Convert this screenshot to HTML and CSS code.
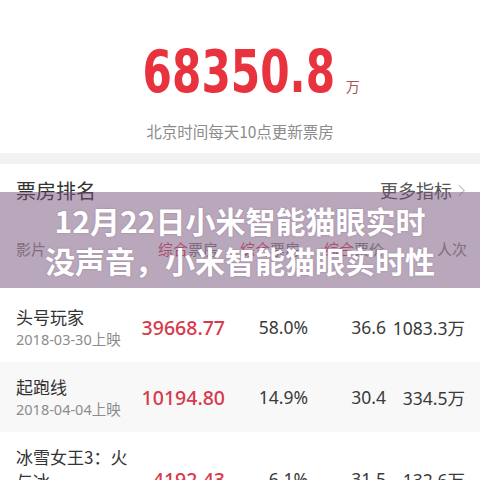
FILE: index.html
```html
<!DOCTYPE html>
<html lang="zh-CN">
<head>
<meta charset="utf-8">
<title>票房</title>
<link rel="stylesheet" href="styles.css">
</head>
<body>
<div class="page">
  <section class="summary">
    <div class="total">
      <span class="total-num">68350.8</span><span class="total-unit">万</span>
    </div>
    <div class="total-note">北京时间每天10点更新票房</div>
  </section>
  <div class="band"></div>
  <section class="rank">
    <div class="rank-head">
      <span class="rank-title">票房排名</span>
      <span class="rank-more">更多指标<svg class="chev" viewBox="0 0 10 16" width="9" height="15"><path d="M2 2 L8 8 L2 14" fill="none" stroke="#c4c4c4" stroke-width="1.4"/></svg></span>
    </div>
    <div class="grid thead">
      <span class="h-film">影片</span>
      <span class="h1"><em>综合</em>票房</span>
      <span class="h2"><em>综合</em>票房</span>
      <span class="h3"><em>综合</em>票价</span>
      <span class="h4">人次</span>
    </div>
    <div class="grid row">
      <div class="film"><div class="name">头号玩家</div><div class="date">2018-03-30上映</div></div>
      <span class="box">39668.77</span>
      <span class="num">58.0%</span>
      <span class="num">36.6</span>
      <span class="num">1083.3万</span>
    </div>
    <div class="grid row alt">
      <div class="film"><div class="name">起跑线</div><div class="date">2018-04-04上映</div></div>
      <span class="box">10194.80</span>
      <span class="num">14.9%</span>
      <span class="num">30.4</span>
      <span class="num">334.5万</span>
    </div>
    <div class="grid row">
      <div class="film"><div class="name">冰雪女王3：火与冰</div><div class="date">2018-04-06上映</div></div>
      <span class="box">4192.43</span>
      <span class="num">6.1%</span>
      <span class="num">31.5</span>
      <span class="num">132.6万</span>
    </div>
  </section>
  <div class="overlay">
    <div class="overlay-title">12月22日小米智能猫眼实时<br>没声音，小米智能猫眼实时性</div>
  </div>
</div>
</body>
</html>
```

FILE: styles.css
```css
html, body {
  margin: 0;
  padding: 0;
  background: #ffffff;
}
body {
  font-family: "Noto Sans", "Noto Sans CJK SC", sans-serif;
  color: #333333;
  width: 480px;
  height: 480px;
  overflow: hidden;
}
.page {
  position: relative;
  width: 480px;
}
.summary {
  padding-top: 43px;
  height: 110px;
  box-sizing: border-box;
  display: flex;
  flex-direction: column;
  align-items: center;
}
.total {
  display: flex;
  align-items: baseline;
  padding-left: 18px;
  line-height: 1;
}
.total-num {
  display: inline-block;
  font-family: "DejaVu Sans Condensed", "DejaVu Sans", sans-serif;
  font-weight: 700;
  font-size: 58px;
  color: #e8323e;
  transform: scaleX(0.81);
  margin: 0 -18px;
  letter-spacing: 0;
}
.total-unit {
  font-family: "Noto Sans CJK SC", sans-serif;
  font-size: 14px;
  color: #a4585c;
  margin-left: 6px;
}
.total-note {
  margin-top: 20px;
  font-family: "Noto Sans CJK SC", sans-serif;
  font-size: 15.5px;
  line-height: 20px;
  color: #8c8c8c;
}
.band {
  margin-top: 43px;
  height: 11px;
  background: #f2f2f2;
}
.rank-head {
  display: flex;
  justify-content: space-between;
  align-items: center;
  padding: 12px 14px 0 16px;
  height: 28px;
}
.rank-title {
  font-family: "Noto Sans CJK SC", sans-serif;
  font-size: 20px;
  color: #333333;
}
.rank-more {
  display: flex;
  align-items: center;
  gap: 5px;
  font-family: "Noto Sans CJK SC", sans-serif;
  font-size: 18px;
  color: #555555;
}
.grid {
  display: grid;
  grid-template-columns: 124px 85px 83px 78px 79px;
  padding: 0 15px 0 16px;
  align-items: center;
}
.thead {
  margin-top: 35px;
  height: 20px;
  padding-bottom: 33px;
  font-family: "Noto Sans CJK SC", sans-serif;
  font-size: 15px;
  line-height: 20px;
  color: #8a8a8a;
}
.thead em {
  font-style: normal;
  color: #e0505e;
}
.h1 { text-align: right; padding-right: 7px; }
.h2 { text-align: right; padding-right: 8px; }
.h3 { text-align: right; padding-right: 2px; }
.h4 { text-align: right; margin-right: -2px; }
.row {
  padding-top: 13px;
  padding-bottom: 13px;
  background: #ffffff;
}
.row.alt {
  background: #f8f8f8;
}
.film {
  min-width: 0;
}
.name {
  font-family: "Noto Sans CJK SC", sans-serif;
  font-size: 17px;
  line-height: 24px;
  color: #333333;
  max-width: 118px;
}
.date {
  font-family: "Noto Sans", "Noto Sans CJK SC", sans-serif;
  font-size: 14.5px;
  line-height: 20px;
  color: #8c8c8c;
  white-space: nowrap;
}
.box, .num {
  font-family: "Noto Sans", "Noto Sans CJK SC", sans-serif;
  text-align: right;
  white-space: nowrap;
}
.box {
  font-size: 19.5px;
  color: #d8394b;
  font-weight: 500;
}
.num {
  font-size: 17.5px;
  color: #3a3a3a;
}
.overlay {
  position: absolute;
  left: 0;
  top: 192px;
  width: 480px;
  height: 96px;
  background: rgba(116, 80, 120, 0.5);
  display: flex;
  align-items: center;
  justify-content: center;
}
.overlay-title {
  font-family: "Noto Sans CJK SC", sans-serif;
  font-weight: 700;
  font-size: 30px;
  line-height: 40px;
  color: #ffffff;
  text-align: center;
  text-shadow: 0 0 2px rgba(80, 50, 80, 0.3);
}
```
